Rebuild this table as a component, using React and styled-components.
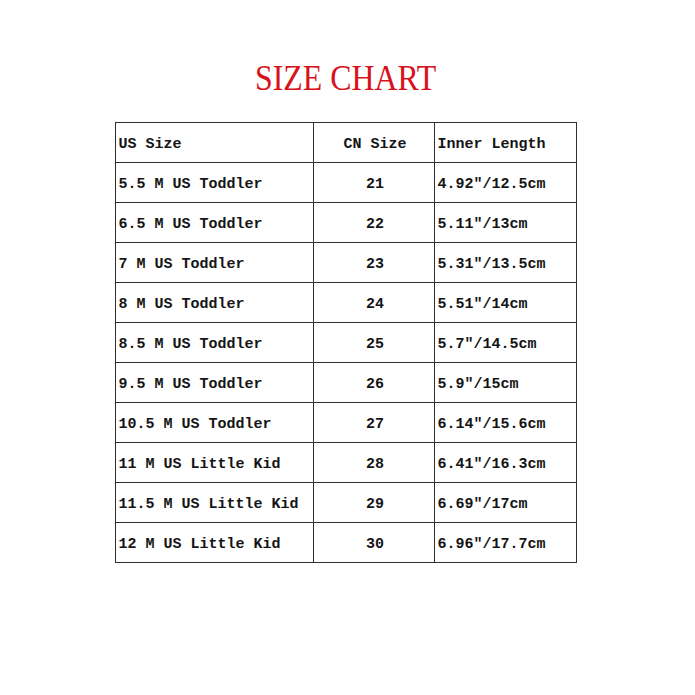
import React from "react";
import styled, { createGlobalStyle } from "styled-components";

const GlobalStyle = createGlobalStyle`
  html, body {
    margin: 0;
    padding: 0;
    background: #ffffff;
  }
`;

const Page = styled.div`
  width: 695px;
  height: 695px;
  padding: 58px 0 0 115px;
  box-sizing: border-box;
`;

const Sheet = styled.div`
  width: 461px;
  display: flex;
  flex-direction: column;
  align-items: center;
`;

const Title = styled.h1`
  margin: 0 0 22px;
  height: 42px;
  line-height: 42px;
  font-family: "Liberation Serif", "Noto Sans CJK SC", serif;
  font-weight: 400;
  font-size: 35px;
  color: #d8121a;
  transform: scaleX(0.91);
`;

const Table = styled.table`
  width: 461px;
  border-collapse: collapse;
  table-layout: fixed;
  font-family: "Liberation Mono", "Noto Sans CJK SC", monospace;
  font-weight: 700;
  font-size: 15px;
  color: #151515;
`;

const Cell = styled.td`
  height: 40px;
  padding: 3px 0 0 3px;
  border: 1.5px solid #2e2e2e;
  text-align: ${p => (p.center ? "center" : "left")};
  white-space: nowrap;
  box-sizing: border-box;
`;

const rows = [
  ["5.5 M US Toddler", "21", "4.92″/12.5cm"],
  ["6.5 M US Toddler", "22", "5.11″/13cm"],
  ["7 M US Toddler", "23", "5.31″/13.5cm"],
  ["8 M US Toddler", "24", "5.51″/14cm"],
  ["8.5 M US Toddler", "25", "5.7″/14.5cm"],
  ["9.5 M US Toddler", "26", "5.9″/15cm"],
  ["10.5 M US Toddler", "27", "6.14″/15.6cm"],
  ["11 M US Little Kid", "28", "6.41″/16.3cm"],
  ["11.5 M US Little Kid", "29", "6.69″/17cm"],
  ["12 M US Little Kid", "30", "6.96″/17.7cm"],
];

export default function App() {
  return (
    <Page>
      <GlobalStyle />
      <Sheet>
        <Title>SIZE CHART</Title>
        <Table>
          <colgroup>
            <col style={{ width: 198 }} />
            <col style={{ width: 121 }} />
            <col style={{ width: 142 }} />
          </colgroup>
          <thead>
            <tr>
              <Cell as="th">US Size</Cell>
              <Cell as="th" center>CN Size</Cell>
              <Cell as="th">Inner Length</Cell>
            </tr>
          </thead>
          <tbody>
            {rows.map(r => (
              <tr key={r[0]}>
                <Cell>{r[0]}</Cell>
                <Cell center>{r[1]}</Cell>
                <Cell>{r[2]}</Cell>
              </tr>
            ))}
          </tbody>
        </Table>
      </Sheet>
    </Page>
  );
}
